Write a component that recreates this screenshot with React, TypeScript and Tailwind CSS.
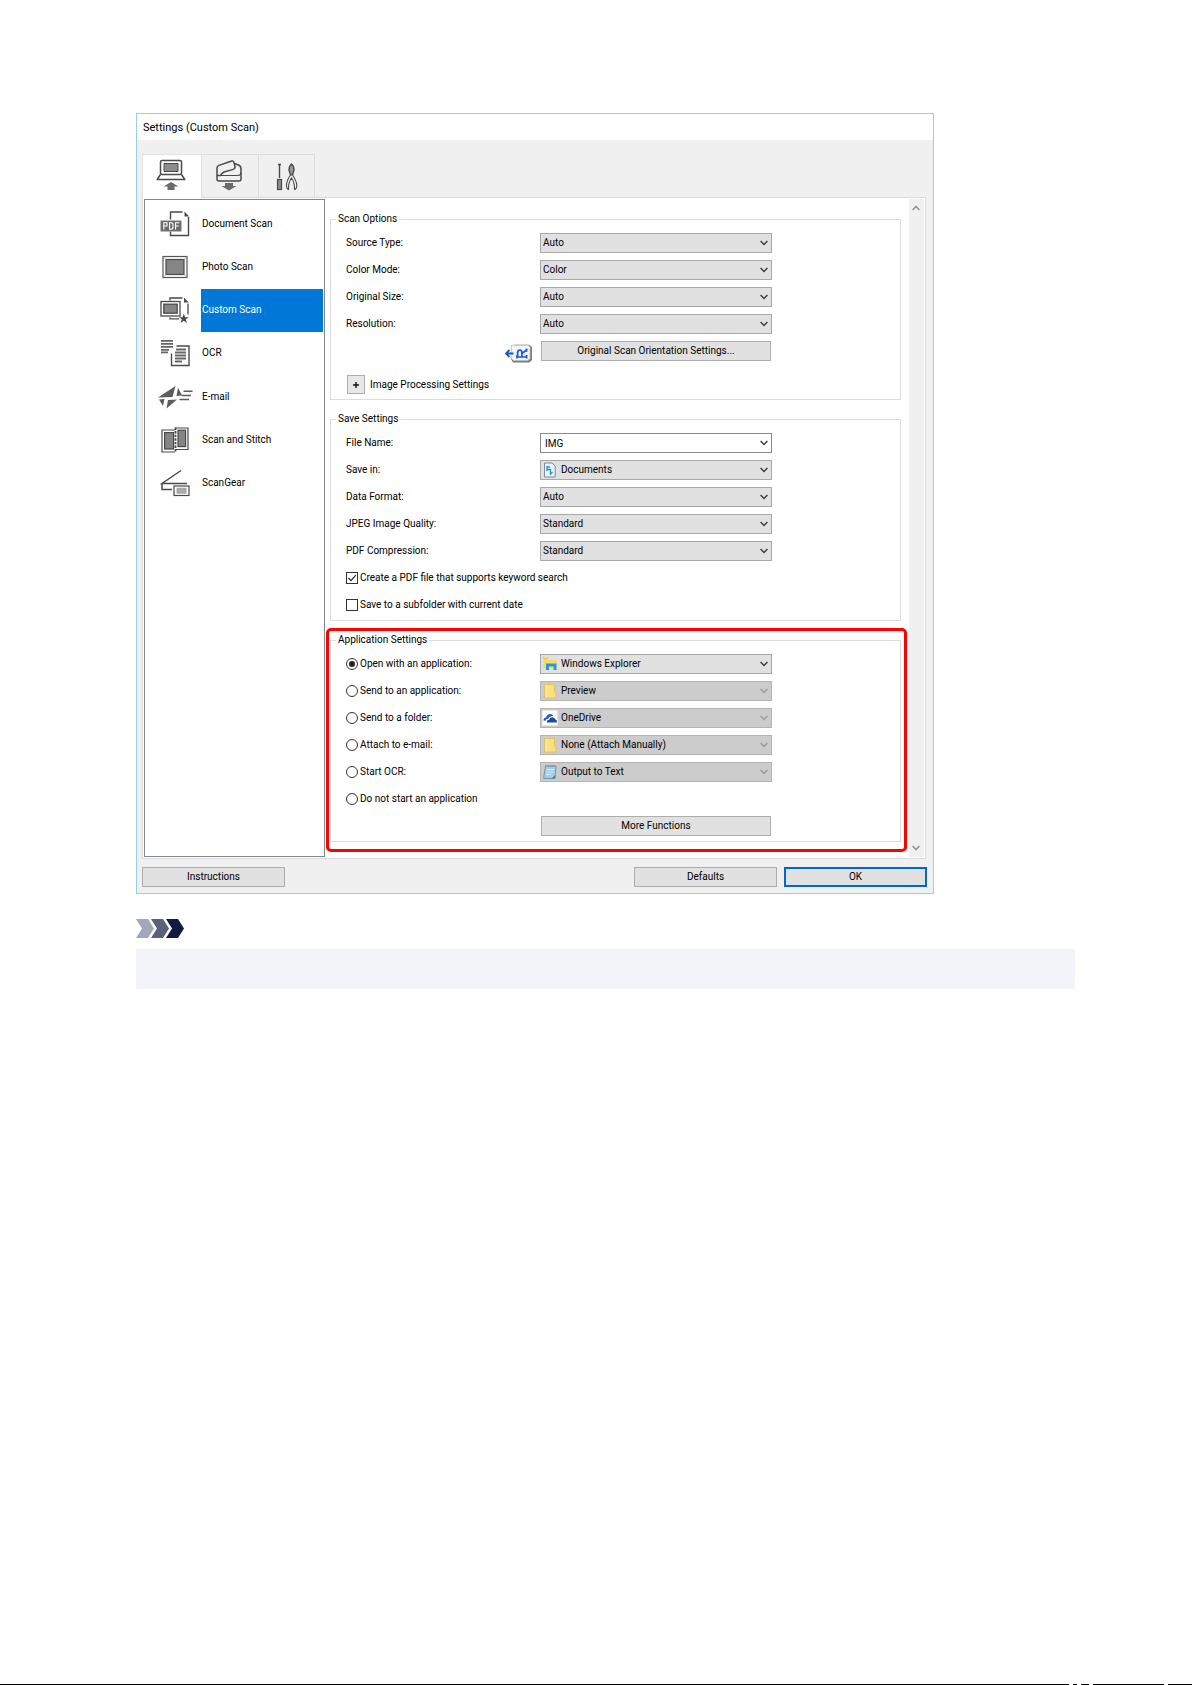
import { useState } from "react";
import type { ReactNode } from "react";

// ---------------- ICONS ----------------
const Chevron = ({ className = "" }: { className?: string }) => (
    <svg viewBox="0 0 8 6" className={`w-2 h-1.5 ${className}`} fill="none" stroke="currentColor" strokeWidth="1.4">
        <path d="M0.6 1 L4 4.4 L7.4 1" />
    </svg>
);

const ComputerIcon = () => (
    <svg viewBox="0 0 30 32" className="w-[30px] h-8" fill="none" stroke="#4a4a4a" strokeWidth="1.5" strokeLinejoin="round">
        <rect x="4.5" y="1.5" width="21" height="14" rx="1.5" />
        <rect x="8" y="4.5" width="14" height="8" fill="#8c8c8c" strokeWidth="1" />
        <path d="M4.5 15.5 L1.2 20.5 H28.8 L25.5 15.5" />
        <path d="M15 23 L22.5 27.5 H18.5 V31 H11.5 V27.5 H7.5 Z" fill="#6a6a6a" stroke="none" />
    </svg>
);

const PanelIcon = () => (
    <svg viewBox="0 0 30 32" className="w-[30px] h-8" fill="none" stroke="#4a4a4a" strokeWidth="1.5" strokeLinejoin="round">
        <path d="M3 9 Q3 7.2 5 6.4 L17 2.2 Q19.5 1.4 20 3.6 L21 7.5 Q21.4 9.8 18.5 10.6 L10 13 Q8 14 6.5 16.5 H3 Z" />
        <path d="M3 16.5 V20 Q3 22 5 22 H25 Q27 22 27 20 V10 Q27 7 24.5 6 L20.5 4.5" />
        <path d="M6.5 16.5 H24 Q26.8 16.2 27 13.5" strokeWidth="1.2" />
        <path d="M15 31.5 L22.5 27 H19 V24 H11 V27 H7.5 Z" fill="#6a6a6a" stroke="none" />
    </svg>
);

const ToolsIcon = () => (
    <svg viewBox="0 0 22 28" className="w-[22px] h-7" fill="none" stroke="#4a4a4a" strokeWidth="1.4">
        <path d="M3.5 1 V15 M2 1.5 H5" />
        <rect x="1.5" y="16.5" width="4" height="10" fill="#8c8c8c" strokeWidth="1.2" />
        <path d="M14.5 12 L13 7 Q13 3 15.5 1 Q18 3 18 7 L16.5 12" fill="#9a9a9a" />
        <path d="M14.5 12 Q10.5 18 10.5 22 Q10.5 26 12.5 26.5 Q12 20 15.5 15 Q19 20 18.5 26.5 Q20.8 26 20.8 22 Q20.5 18 16.5 12 Z" strokeWidth="1.1" />
    </svg>
);

const DocumentIcon = () => (
    <svg viewBox="0 0 30 28" className="w-[30px] h-7" fill="none" stroke="#4a4a4a" strokeWidth="1.4">
        <path d="M10.5 9.5 V2 H22.5 M28.5 7 V25.5 H10.5 V21.5" />
        <path d="M24.5 1.5 L29.2 6.5 H24.5 Z" fill="#4a4a4a" stroke="none" />
        <rect x="1" y="11" width="20" height="10" fill="#6b6b6b" stroke="#777" strokeWidth="1" />
        <path d="M3.8 19.5 V12.8 H7 V16 H4 M9.6 12.8 H11.8 L13 14 V18 L11.8 19.2 H9.6 Z M15.6 19.5 V12.8 H19.4 M15.6 16 H18.8" stroke="#fff" strokeWidth="1.1" />
    </svg>
);

const PhotoIcon = () => (
    <svg viewBox="0 0 30 28" className="w-[30px] h-7" fill="none" stroke="#555" strokeWidth="1.2">
        <rect x="3" y="3.5" width="24" height="21" />
        <rect x="6" y="6.5" width="18" height="15" fill="#858585" stroke="#4a4a4a" />
        <path d="M3 3.5 L6 6.5 M27 3.5 L24 6.5 M3 24.5 L6 21.5 M27 24.5 L24 21.5" stroke="#999" strokeWidth="0.8" />
    </svg>
);

const CustomIcon = () => (
    <svg viewBox="0 0 30 28" className="w-[30px] h-7" fill="none" stroke="#4a4a4a" strokeWidth="1.3">
        <path d="M10 4.5 V2 H22.5 M28 7.5 V18.5 M10 21.5 V22.8 H19" />
        <path d="M24 1.5 L28.7 6.5 H24 Z" fill="#4a4a4a" stroke="none" />
        <rect x="1" y="5.5" width="19" height="14.5" />
        <rect x="3.8" y="8.2" width="13.4" height="9" fill="#858585" />
        <path d="M23.8 17.5 L25 21.2 H28.8 L25.8 23.3 L27 27 L23.8 24.8 L20.6 27 L21.8 23.3 L18.8 21.2 H22.6 Z" fill="#4a4a4a" stroke="none" />
    </svg>
);

const OcrIcon = () => (
    <svg viewBox="0 0 30 28" className="w-[30px] h-7" fill="none" stroke="#666" strokeWidth="1.8">
        <path d="M1 1.8 H13 M1 4.8 H13 M1 7.8 H13 M1 10.8 H9 M1 13.4 H8" />
        <path d="M16.5 7 H29 V26.5 H11.5 V14.5" stroke="#4a4a4a" strokeWidth="1.4" />
        <path d="M16 10.5 H26 M15 13.5 H26 M15 16.5 H26 M15 19.5 H26 M15 22.5 H22" />
    </svg>
);

const EmailIcon = () => (
    <svg viewBox="0 0 36 28" className="w-9 h-7" fill="#5c5c5c">
        <path d="M1 14.5 L18.5 3 L15.5 14 Z" />
        <path d="M2 16.5 L7.5 16 L6 23 Z" />
        <path d="M9.5 25.5 L11 17 L20 16.5 Z" />
        <path d="M19.5 13 L21 4.5 L25 12.5 Z" />
        <path d="M26.5 8.2 H35.5 M24.5 12.4 H34 M22.5 16.6 H32" stroke="#5c5c5c" strokeWidth="1.5" />
    </svg>
);

const StitchIcon = () => (
    <svg viewBox="0 0 30 28" className="w-[30px] h-7" fill="none" stroke="#4a4a4a" strokeWidth="1.2">
        <path d="M15 4 H2 V26 H15" />
        <rect x="4.6" y="6.6" width="9" height="16.4" fill="#858585" />
        <path d="M15 2 H28 V23.5 H16" />
        <rect x="18" y="4.2" width="7.6" height="16.4" fill="#858585" />
        <path d="M15.5 1.5 V26.5" strokeWidth="1.8" strokeDasharray="2.4 1.2" />
    </svg>
);

const GearIcon = () => (
    <svg viewBox="0 0 30 28" className="w-[30px] h-7" fill="none" stroke="#4a4a4a" strokeWidth="1.5">
        <path d="M21 1.5 L2 14.5 H27 M2 14.5 V20.5 H12" />
        <rect x="14" y="17" width="15" height="9.5" strokeWidth="1.2" />
        <rect x="17" y="19.2" width="9" height="5" fill="#ababab" stroke="#999" strokeWidth="0.8" />
    </svg>
);

const OrientationIcon = () => (
    <svg viewBox="0 0 28 19" className="w-7 h-[19px]" fill="none">
        <path d="M7 2 L10 0.8 H24 L27 3 V16 L24.5 18.6 H8 L6 15 V13" fill="#7c7c7c" />
        <path d="M6.5 1.2 H23 L25 3 V14.5 L23 16.5 H8.5 L6 14 Z" fill="#f6f6f6" stroke="#c0c0c0" strokeWidth="0.8" />
        <path d="M4.5 6 L1 9.5 L4.5 13 M1.2 9.5 H8.5" stroke="#1457c8" strokeWidth="1.9" />
        <path d="M11.5 13 H22 M12 11 V14.5 M21.6 11 V14.5 M12.6 13 V8.6 Q12.8 6 14.8 6 Q16.8 6 16.9 8.6 V13 M16.9 9.5 L21.5 6 M21.6 4.4 V7.8" stroke="#1457e8" strokeWidth="1.7" />
    </svg>
);

const DocumentsIcon = () => (
    <svg viewBox="0 0 16 16" className="w-4 h-4" fill="none">
        <path d="M2.5 1 H10 L13.2 4 V15 H2.5 Z" fill="#e8f3fb" stroke="#7f8b96" />
        <path d="M5 4 V9 M5 5 H8 M5 7.5 H9 M8.5 7 V13 M8.5 12 L10.5 10" stroke="#2c8fd6" strokeWidth="1.3" />
    </svg>
);

const ExplorerIcon = () => (
    <svg viewBox="0 0 16 16" className="w-4 h-4">
        <path d="M1 2 L3 1 L6 3.5 H14.5 V12.5 H1.5 Z" fill="#fbdc62" />
        <path d="M1 1 L4 3.5 M6 1 L4.5 3" stroke="#e9b93a" />
        <path d="M4 14 V7.5 H14.5 V14 H11.5 V10.5 H7 V14 Z" fill="#2d95dc" />
    </svg>
);

const FolderIcon = () => (
    <svg viewBox="0 0 16 16" className="w-4 h-4">
        <path d="M2.5 1.5 H12.5 V9 L14 10 V15 H2.5 Z" fill="#fbe07e" stroke="#e5bd4f" strokeWidth="0.8" />
        <path d="M4.5 2 V14.5" stroke="#fdeeb0" />
    </svg>
);

const OneDriveIcon = () => (
    <svg viewBox="0 0 16 16" className="w-4 h-4">
        <rect x="0.5" y="0.5" width="15" height="15" fill="#fff" />
        <path d="M1.5 10.5 Q1.5 7.8 4 7.6 Q5 4 8.2 4 Q10.4 4 11.3 6 Q7.4 6 6.3 8.8 Q3.8 8.9 3.6 10.8 Z" fill="#2c5fb5" />
        <path d="M5 12.5 Q4.6 10 7.2 9.8 Q8 7 11 7.4 Q13 7.8 13.2 9.3 Q15.2 9.8 15 12.5 Z" fill="#1c4a9c" />
    </svg>
);

const NotepadIcon = () => (
    <svg viewBox="0 0 16 16" className="w-4 h-4">
        <path d="M3.5 2 H14 L13 14.5 H1.5 Z" fill="#9fcdea" stroke="#6d8796" strokeWidth="0.8" />
        <path d="M4 1 V3 M6 1 V3 M8 1 V3 M10 1 V3 M12 1 V3" stroke="#7b8f9b" strokeWidth="0.8" />
        <path d="M4.5 5.5 H12 M4.3 8 H11.8 M4 10.5 H9" stroke="#d6edf9" />
        <path d="M13 14.5 L9.5 14.5 L13.3 11 Z" fill="#3f7fa8" />
    </svg>
);

// ---------------- CONTROLS ----------------
const Group = ({ title, children }: { title: string; children: ReactNode }) => (
    <fieldset className="border border-[#dcdcdc] min-w-0">
        <legend className="ml-[5px] px-[2px] h-[14px] leading-[14px]">{title}</legend>
        <div className="flex flex-col gap-[7px] px-[15px] pt-[7px] pb-[5px]">{children}</div>
    </fieldset>
);

const Row = ({ children }: { children: ReactNode }) => (
    <div className="grid grid-cols-[194px_232px] items-center h-5">{children}</div>
);

type DropdownProps = { id: string; label?: string; value: string; icon?: ReactNode; disabled?: boolean };

const Dropdown = ({ id, label, value, icon, disabled }: DropdownProps) => (
    <div className="relative">
        <select
            id={id}
            aria-label={label}
            disabled={disabled}
            className={`block appearance-none w-full h-5 border pr-5 text-black opacity-100 ${icon ? "pl-5" : "pl-[2px]"} ${disabled ? "bg-[#cccccc] border-[#b4b4b4]" : "bg-[#e1e1e1] border-[#a8a8a8]"}`}
        >
            <option>{value}</option>
        </select>
        {icon && <span className="absolute left-[2px] top-[2px] pointer-events-none">{icon}</span>}
        <Chevron className={`absolute right-1 top-[7px] pointer-events-none ${disabled ? "text-[#9a9a9a]" : "text-[#3a3a3a]"}`} />
    </div>
);

const Field = ({ id, label, value, icon }: { id: string; label: string; value: string; icon?: ReactNode }) => (
    <Row>
        <label htmlFor={id}>{label}</label>
        <Dropdown id={id} value={value} icon={icon} />
    </Row>
);

const buttonStyle = "bg-[#e1e1e1] border border-[#adadad] text-center h-5";

// ---------------- DATA ----------------
const scans = [
    { name: "Document Scan", icon: <DocumentIcon /> },
    { name: "Photo Scan", icon: <PhotoIcon /> },
    { name: "Custom Scan", icon: <CustomIcon /> },
    { name: "OCR", icon: <OcrIcon /> },
    { name: "E-mail", icon: <EmailIcon /> },
    { name: "Scan and Stitch", icon: <StitchIcon /> },
    { name: "ScanGear", icon: <GearIcon /> },
];

const actions = [
    { id: "open", label: "Open with an application:", value: "Windows Explorer", icon: <ExplorerIcon /> },
    { id: "send-app", label: "Send to an application:", value: "Preview", icon: <FolderIcon /> },
    { id: "send-folder", label: "Send to a folder:", value: "OneDrive", icon: <OneDriveIcon /> },
    { id: "attach", label: "Attach to e-mail:", value: "None (Attach Manually)", icon: <FolderIcon /> },
    { id: "ocr", label: "Start OCR:", value: "Output to Text", icon: <NotepadIcon /> },
    { id: "none", label: "Do not start an application" },
];

export default function App() {
    const [scan, setScan] = useState("Custom Scan");
    const [action, setAction] = useState("open");
    const [keywordSearch, setKeywordSearch] = useState(true);
    const [subfolder, setSubfolder] = useState(false);

    const checks = [
        { label: "Create a PDF file that supports keyword search", checked: keywordSearch, set: setKeywordSearch },
        { label: "Save to a subfolder with current date", checked: subfolder, set: setSubfolder },
    ];

    return (
        <div className="min-h-screen w-full flex flex-col bg-white text-black text-[10px] leading-[14px] font-['Roboto',sans-serif]">
            <main className="pt-[113px] pl-[136px] pr-[117px]">
                {/* Settings dialog */}
                <section className="w-full max-w-[798px] border border-[#9fcbf0] bg-[#f0f0f0]">
                    <h1 className="bg-white h-[26px] pl-[6px] pt-px text-[11px] leading-[26px]">Settings (Custom Scan)</h1>

                    <div className="px-[5px] pt-[14px] pb-[6px]">
                        {/* Tabs */}
                        <div className="flex h-11 relative z-10 -mb-px">
                            <button aria-label="Scanning from a computer" className="w-[60px] bg-white border-t border-x border-[#e2e2e2] flex justify-center pt-1 pr-[3px]">
                                <ComputerIcon />
                            </button>
                            <button aria-label="Scanning from the operation panel" className="w-[57px] border-t border-r border-[#dcdcdc] flex justify-center pt-1 pr-[3px]">
                                <PanelIcon />
                            </button>
                            <button aria-label="General settings" className="w-[56px] border-t border-r border-[#dcdcdc] flex justify-center pt-2">
                                <ToolsIcon />
                            </button>
                        </div>

                        <div className="flex bg-white border border-[#dcdcdc] p-px mr-[2px]">
                            {/* Scan list */}
                            <nav className="w-[181px] shrink-0 border border-[#828790] pt-[2px]">
                                <div className="grid grid-rows-7 h-[303px]">
                                    {scans.map((item) => (
                                        <button
                                            key={item.name}
                                            onClick={() => setScan(item.name)}
                                            className="flex text-left"
                                        >
                                            <span className="w-14 h-full flex items-center justify-center pl-1">{item.icon}</span>
                                            <span className={`flex-1 h-full flex items-center pl-px mr-px ${scan === item.name ? "bg-[#0078d7] text-white" : ""}`}>
                                                {item.name}
                                            </span>
                                        </button>
                                    ))}
                                </div>
                            </nav>

                            <div className="flex-1 min-w-0 pl-px pr-[2px] pt-[13px] pb-[5px]">
                                <div className="pl-1 pr-[6px] flex flex-col gap-3 mb-[7px]">
                                    <Group title="Scan Options">
                                        <Field id="source" label="Source Type:" value="Auto" />
                                        <Field id="color" label="Color Mode:" value="Color" />
                                        <Field id="size" label="Original Size:" value="Auto" />
                                        <Field id="resolution" label="Resolution:" value="Auto" />
                                        <Row>
                                            <span className="flex justify-end pr-[7px] pt-[3px]"><OrientationIcon /></span>
                                            <button className={`${buttonStyle} mx-px self-start`}>Original Scan Orientation Settings...</button>
                                        </Row>
                                        <div className="flex items-center gap-[5px] pt-[7px]">
                                            <button aria-label="Expand Image Processing Settings" className="w-[18px] h-[19px] ml-px border border-[#adadad] bg-[#e8e8e8] flex items-center justify-center">
                                                <svg viewBox="0 0 6 6" className="w-1.5 h-1.5" stroke="#111" strokeWidth="1.4">
                                                    <path d="M3 0 V6 M0 3 H6" />
                                                </svg>
                                            </button>
                                            <span>Image Processing Settings</span>
                                        </div>
                                    </Group>

                                    <Group title="Save Settings">
                                        <Row>
                                            <label htmlFor="file-name">File Name:</label>
                                            <div className="relative">
                                                <input id="file-name" defaultValue="IMG" className="block w-full h-5 border border-[#8a8a8a] bg-white pl-1 pr-5" />
                                                <Chevron className="absolute right-1 top-[7px] text-[#3a3a3a]" />
                                            </div>
                                        </Row>
                                        <Field id="save-in" label="Save in:" value="Documents" icon={<DocumentsIcon />} />
                                        <Field id="format" label="Data Format:" value="Auto" />
                                        <Field id="quality" label="JPEG Image Quality:" value="Standard" />
                                        <Field id="compression" label="PDF Compression:" value="Standard" />
                                        {checks.map((check) => (
                                            <label key={check.label} className="flex items-center gap-[2px] h-5">
                                                <span className="relative w-3 h-3">
                                                    <input
                                                        type="checkbox"
                                                        checked={check.checked}
                                                        onChange={(e) => check.set(e.target.checked)}
                                                        className="block appearance-none w-3 h-3 border border-[#333] bg-white"
                                                    />
                                                    {check.checked && (
                                                        <svg viewBox="0 0 12 12" className="absolute inset-0 w-3 h-3 pointer-events-none" fill="none" stroke="#222" strokeWidth="1.2">
                                                            <path d="M2.5 6 L5 8.6 L9.8 3.2" />
                                                        </svg>
                                                    )}
                                                </span>
                                                {check.label}
                                            </label>
                                        ))}
                                    </Group>
                                </div>

                                {/* Highlighted area */}
                                <div className="border-[3px] border-[#ff0000] rounded-[5px] pl-px pr-[3px] pt-[2px] pb-[7px]">
                                    <Group title="Application Settings">
                                        {actions.map((item) => (
                                            <Row key={item.id}>
                                                <label className="flex items-center gap-[2px]">
                                                    <span className="relative w-3 h-3">
                                                        <input
                                                            type="radio"
                                                            name="action"
                                                            checked={action === item.id}
                                                            onChange={() => setAction(item.id)}
                                                            className="block appearance-none w-3 h-3 rounded-full border border-[#333] bg-white"
                                                        />
                                                        {action === item.id && (
                                                            <span className="absolute inset-[3px] rounded-full bg-[#222] pointer-events-none" />
                                                        )}
                                                    </span>
                                                    {item.label}
                                                </label>
                                                {item.value && (
                                                    <Dropdown
                                                        id={item.id}
                                                        label={item.label}
                                                        value={item.value}
                                                        icon={item.icon}
                                                        disabled={action !== item.id}
                                                    />
                                                )}
                                            </Row>
                                        ))}
                                        <Row>
                                            <button className={`${buttonStyle} col-start-2 mx-px`}>More Functions</button>
                                        </Row>
                                    </Group>
                                </div>
                            </div>

                            {/* Scrollbar */}
                            <div className="w-[15px] shrink-0 bg-[#f0f0f0] flex flex-col items-center justify-between py-[6px] pr-px text-[#8a8a8a]">
                                <Chevron className="rotate-180" />
                                <Chevron />
                            </div>
                        </div>

                        <div className="flex gap-[7px] mt-2 mr-px">
                            <button className={`${buttonStyle} w-[143px]`}>Instructions</button>
                            <button className={`${buttonStyle} w-[143px] ml-auto`}>Defaults</button>
                            <button className="w-[143px] h-5 bg-[#e1e1e1] border-2 border-[#0067d3] text-center">OK</button>
                        </div>
                    </div>
                </section>

                {/* Note heading */}
                <svg viewBox="0 0 48 19" className="w-12 h-[19px] mt-[25px]">
                    <path d="M0 0 H12 L18 9.5 L12 19 H0 L6 9.5 Z" fill="#a2a8b7" />
                    <path d="M15 0 H27 L33 9.5 L27 19 H15 L21 9.5 Z" fill="#59617c" />
                    <path d="M30 0 H42 L48 9.5 L42 19 H30 L36 9.5 Z" fill="#111a42" />
                </svg>
                <div className="mt-[11px] h-10 bg-[#f3f4fa]" />
            </main>

            {/* Bottom rule */}
            <div className="mt-auto h-px flex gap-1">
                <div className="bg-black grow-[1077]" />
                <div className="bg-black w-1" />
                <div className="bg-black w-2" />
                <div className="bg-black grow-[72]" />
                <div className="bg-black w-6" />
            </div>
        </div>
    );
}
